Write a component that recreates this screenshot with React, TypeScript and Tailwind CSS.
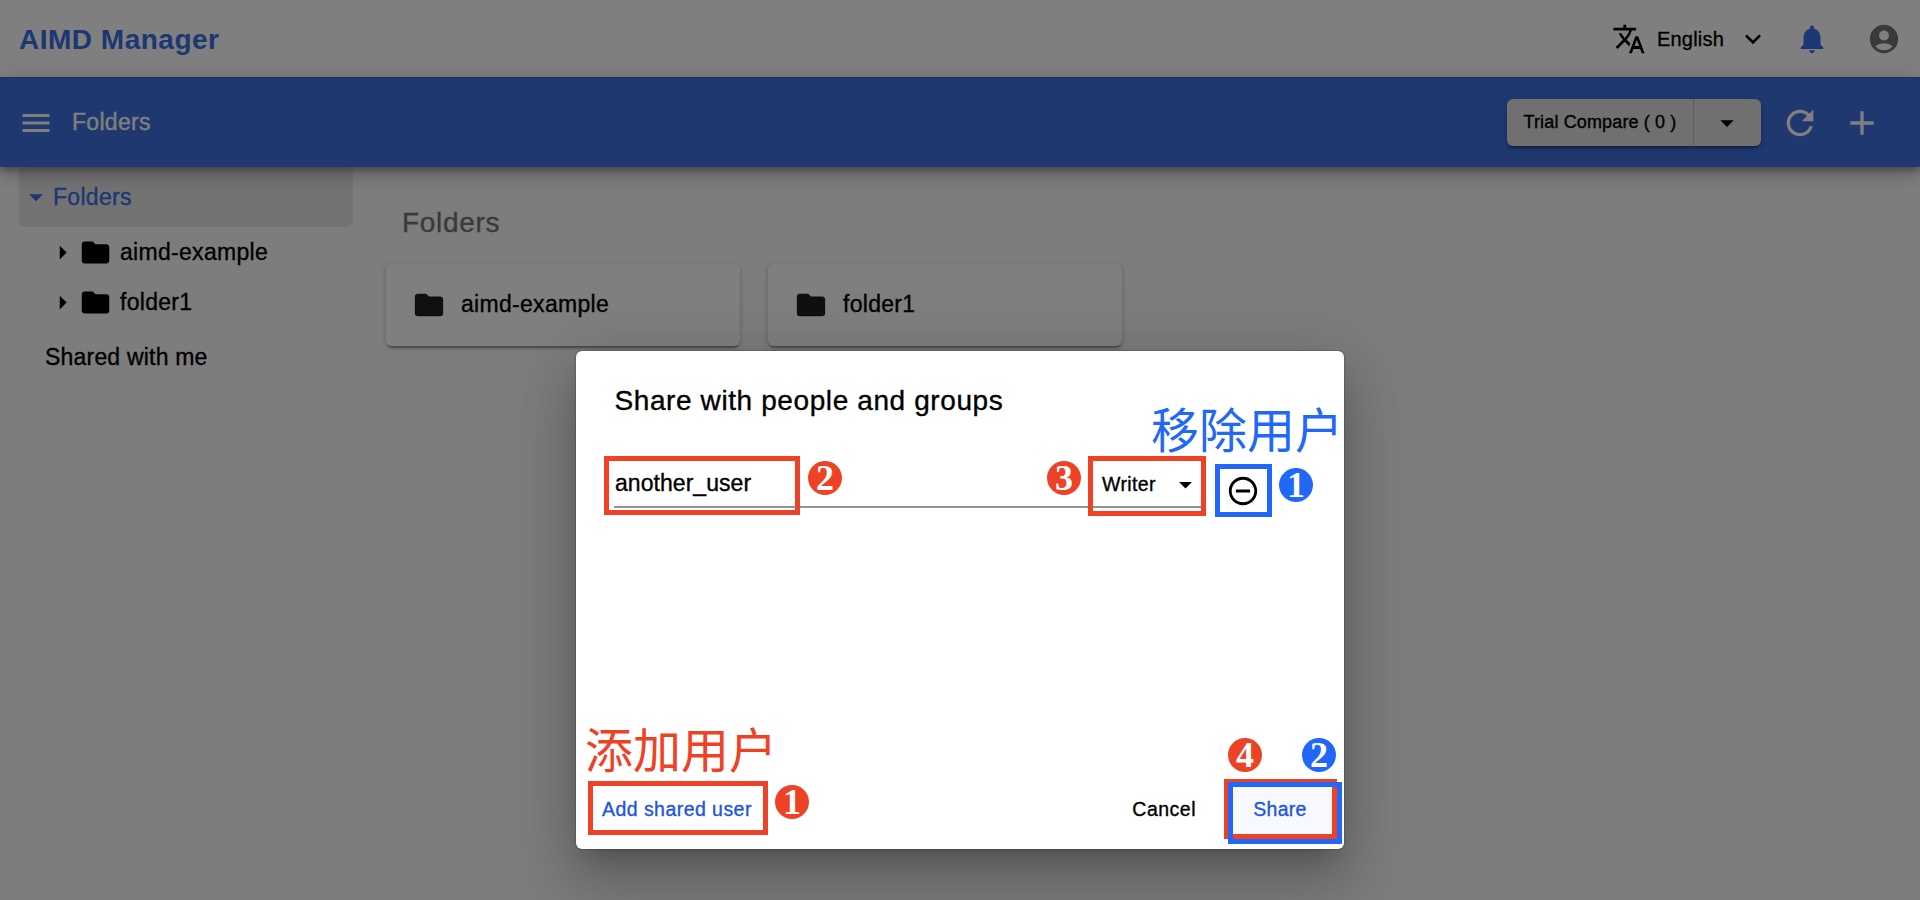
import type { ReactNode } from "react";
import {
  MdAccountCircle,
  MdAdd,
  MdArrowDropDown,
  MdArrowRight,
  MdExpandMore,
  MdFolder,
  MdMenu,
  MdNotifications,
  MdRefresh,
  MdRemoveCircleOutline,
  MdTranslate,
} from "react-icons/md";

function Header() {
  return (
    <header className="flex h-[77px] shrink-0 items-center justify-between bg-white pt-px pr-[19px] pl-[19px]">
      <h1 className="pt-[2px] text-[28px] leading-none font-bold tracking-[0.5px] text-[#3b6fe6] [-webkit-text-stroke:0px]">
        AIMD Manager
      </h1>
      <div className="flex items-center">
        <MdTranslate className="size-[34px]" />
        <span className="ml-[11px] text-[20px] leading-none tracking-[0.2px]">English</span>
        <MdExpandMore className="ml-[13px] size-[32px]" />
        <MdNotifications className="ml-[26px] size-[34px] text-[#3b6fe6]" />
        <MdAccountCircle className="ml-[38px] size-[34px] text-[#757575]" />
      </div>
    </header>
  );
}

function Toolbar() {
  return (
    <div className="relative z-10 flex h-[90px] shrink-0 items-center border-t border-[#4a62a0] bg-[#3e70e0] pr-[38px] pl-[18px] text-white shadow-[0_4px_7px_-1px_rgba(0,0,0,0.3),0_9px_15px_rgba(0,0,0,0.14),0_1px_26px_rgba(0,0,0,0.12)]">
      <MdMenu className="size-[36px]" />
      <span className="ml-[18px] text-[23px] leading-none tracking-[0.3px]">Folders</span>
      <div className="ml-auto flex h-[47px] items-stretch rounded-md bg-[#e0e0e0] text-black shadow-[0_4px_2px_-2px_rgba(0,0,0,0.2),0_3px_3px_rgba(0,0,0,0.14),0_1px_7px_rgba(0,0,0,0.12)]">
        <button className="flex w-[187px] items-center justify-center border-r border-[#bdbdbd] pb-px text-[18px] leading-none tracking-[0.14px] whitespace-nowrap">
          Trial Compare ( 0 )
        </button>
        <button className="flex w-[67px] items-center justify-center pr-px">
          <MdArrowDropDown className="size-[32px]" />
        </button>
      </div>
      <MdRefresh className="ml-[19px] size-[40px]" />
      <MdAdd className="ml-[22px] size-[40px]" />
    </div>
  );
}

function TreeRow({ name }: { name: string }) {
  return (
    <div className="flex h-[50px] items-center pl-[27px]">
      <MdArrowRight className="size-[33px]" />
      <MdFolder className="size-[33px]" />
      <span className="ml-[8px] text-[23px] leading-none tracking-[0.3px]">{name}</span>
    </div>
  );
}

function Sidebar() {
  return (
    <nav className="w-[334px] shrink-0">
      <div className="flex h-[60px] items-center rounded-md bg-[#e6e6e6] text-[#3b6fe6]">
        <MdArrowDropDown className="size-[34px]" />
        <span className="text-[23px] leading-none tracking-[0.3px]">Folders</span>
      </div>
      <TreeRow name="aimd-example" />
      <TreeRow name="folder1" />
      <div className="flex h-[58px] items-center pt-[2px] pl-[26px] text-[23px] leading-none tracking-[0.2px]">
        Shared with me
      </div>
    </nav>
  );
}

function FolderCard({ name }: { name: string }) {
  return (
    <div className="flex h-[82px] w-[354px] items-center rounded-md bg-white pl-[26px] shadow-[0_4px_2px_-2px_rgba(0,0,0,0.24),0_2px_3px_rgba(0,0,0,0.16),0_1px_6px_rgba(0,0,0,0.14)]">
      <MdFolder className="size-[34px] text-[#202020]" />
      <span className="ml-[15px] pb-px text-[23px] leading-none tracking-[0.3px]">{name}</span>
    </div>
  );
}

function Badge({ className, children }: { className: string; children: ReactNode }) {
  return (
    <span
      className={`absolute flex size-[34px] items-center justify-center rounded-full font-['Liberation_Serif',serif] text-[36px] leading-[34px] font-bold text-white [-webkit-text-stroke:0px] ${className}`}
    >
      {children}
    </span>
  );
}

function Annotations() {
  return (
    <div className="pointer-events-none absolute inset-0">
      <div className="absolute top-[105px] left-[28px] h-[59px] w-[196px] border-[5px] border-[#ee4226]" />
      <Badge className="top-[110px] left-[232px] bg-[#ee4226]">2</Badge>
      <Badge className="top-[110px] left-[471px] bg-[#ee4226]">3</Badge>
      <div className="absolute top-[105px] left-[512px] h-[60px] w-[118px] border-[5px] border-[#ee4226]" />
      <div className="absolute top-[113px] left-[639px] h-[53px] w-[57px] border-[5px] border-[#2168f8]" />
      <Badge className="top-[117px] left-[703px] bg-[#2168f8]">1</Badge>
      <div className="absolute top-[52px] left-[575px] font-['Noto_Sans_CJK_SC',sans-serif] text-[48px] leading-[48px] font-normal whitespace-nowrap text-[#2168f8] [-webkit-text-stroke:0px]">
        移除用户
      </div>
      <div className="absolute top-[372px] left-[9px] font-['Noto_Sans_CJK_SC',sans-serif] text-[48px] leading-[48px] font-normal whitespace-nowrap text-[#ee4226] [-webkit-text-stroke:0px]">
        添加用户
      </div>
      <div className="absolute top-[430px] left-[12px] h-[54px] w-[180px] border-[5px] border-[#ee4226]" />
      <Badge className="top-[434px] left-[199px] bg-[#ee4226]">1</Badge>
      <Badge className="top-[387px] left-[652px] bg-[#ee4226]">4</Badge>
      <Badge className="top-[387px] left-[726px] bg-[#2168f8]">2</Badge>
      <div className="absolute top-[428px] left-[648px] h-[60px] w-[113px] border-[5px] border-[#ee4226]" />
      <div className="absolute top-[431px] left-[652px] h-[62px] w-[114px] border-[5px] border-[#2168f8]" />
    </div>
  );
}

function ShareDialog() {
  return (
    <div className="relative flex h-[498px] w-[768px] flex-col rounded-md bg-white shadow-[0_0_2px_rgba(0,0,0,0.5),0_16px_22px_-10px_rgba(0,0,0,0.2),0_36px_56px_4px_rgba(0,0,0,0.14),0_13px_68px_12px_rgba(0,0,0,0.12)]">
      <h2 className="flex h-[99px] items-center pl-[38.5px] text-[28px] leading-none tracking-[0.6px]">
        Share with people and groups
      </h2>
      <div className="flex pl-[38px]">
        <div className="flex h-[58px] w-[587px] items-center justify-between border-b-[2px] border-[#949494] pt-[10px]">
          <span className="pt-px pl-px text-[23px] leading-none tracking-[0.05px]">another_user</span>
          <span className="flex items-center pt-[3px] text-[19.5px] leading-none tracking-[0.4px]">
            Writer
            <MdArrowDropDown className="ml-[14px] size-[31px]" />
          </span>
        </div>
        <MdRemoveCircleOutline className="mt-[24px] ml-[25px] size-[34px]" />
      </div>
      <div className="mt-auto flex h-[80px] items-center text-[19.5px] leading-none">
        <button className="ml-[26px] pt-[2px] tracking-[0.45px] text-[#2354dc]">Add shared user</button>
        <button className="ml-auto pt-[2px] tracking-[0.5px]">Cancel</button>
        <button className="mr-[11px] ml-[35px] h-[49px] w-[102px] bg-[#f7f9ff] pt-[2px] pr-[4px] tracking-[0.3px] text-[#2354dc]">
          Share
        </button>
      </div>
      <Annotations />
    </div>
  );
}

export default function App() {
  return (
    <div className="relative flex h-[900px] w-full flex-col overflow-hidden bg-[#fafafa] font-['Liberation_Sans',Arial,sans-serif] text-black [-webkit-text-stroke:0.35px]">
      <Header />
      <Toolbar />
      <div className="flex flex-1 pl-[19px]">
        <Sidebar />
        <main className="pl-[33px]">
          <h2 className="flex h-[97px] items-center pt-[15px] pl-[16px] text-[28px] leading-none tracking-[0.7px] text-[#757575]">
            Folders
          </h2>
          <div className="flex gap-[28px]">
            <FolderCard name="aimd-example" />
            <FolderCard name="folder1" />
          </div>
        </main>
      </div>
      <div className="absolute inset-0 z-20 flex items-start justify-center bg-black/50 pt-[351px]">
        <ShareDialog />
      </div>
    </div>
  );
}
